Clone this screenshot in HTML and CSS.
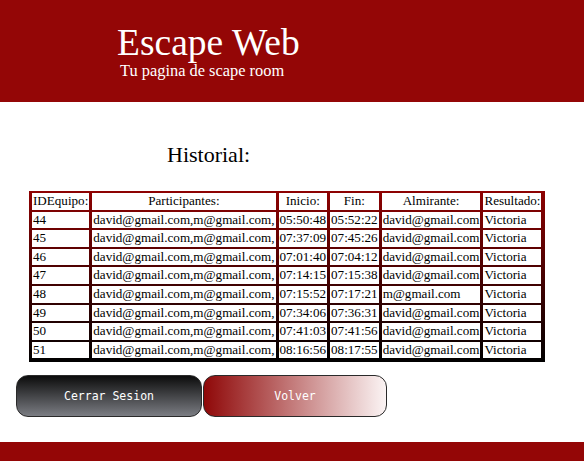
FILE: index.html
```html
<!DOCTYPE html>
<html lang="es">
<head>
<meta charset="utf-8">
<title>Escape Web - Historial</title>
<link rel="stylesheet" href="styles.css">
</head>
<body>
<header class="site-header">
  <h1 class="site-title">Escape Web</h1>
  <p class="site-subtitle">Tu pagina de scape room</p>
</header>
<main class="content">
  <h2 class="section-title">Historial:</h2>
  <table class="history">
    <thead>
      <tr><th>IDEquipo:</th><th>Participantes:</th><th>Inicio:</th><th>Fin:</th><th>Almirante:</th><th>Resultado:</th></tr>
    </thead>
    <tbody>
      <tr><td>44</td><td>david@gmail.com,m@gmail.com,</td><td>05:50:48</td><td>05:52:22</td><td>david@gmail.com</td><td>Victoria</td></tr>
      <tr><td>45</td><td>david@gmail.com,m@gmail.com,</td><td>07:37:09</td><td>07:45:26</td><td>david@gmail.com</td><td>Victoria</td></tr>
      <tr><td>46</td><td>david@gmail.com,m@gmail.com,</td><td>07:01:40</td><td>07:04:12</td><td>david@gmail.com</td><td>Victoria</td></tr>
      <tr><td>47</td><td>david@gmail.com,m@gmail.com,</td><td>07:14:15</td><td>07:15:38</td><td>david@gmail.com</td><td>Victoria</td></tr>
      <tr><td>48</td><td>david@gmail.com,m@gmail.com,</td><td>07:15:52</td><td>07:17:21</td><td>m@gmail.com</td><td>Victoria</td></tr>
      <tr><td>49</td><td>david@gmail.com,m@gmail.com,</td><td>07:34:06</td><td>07:36:31</td><td>david@gmail.com</td><td>Victoria</td></tr>
      <tr><td>50</td><td>david@gmail.com,m@gmail.com,</td><td>07:41:03</td><td>07:41:56</td><td>david@gmail.com</td><td>Victoria</td></tr>
      <tr><td>51</td><td>david@gmail.com,m@gmail.com,</td><td>08:16:56</td><td>08:17:55</td><td>david@gmail.com</td><td>Victoria</td></tr>
    </tbody>
  </table>
  <div class="actions">
    <button class="btn btn-dark" type="button">Cerrar Sesion</button>
    <button class="btn btn-red" type="button">Volver</button>
  </div>
</main>
<footer class="site-footer"></footer>
</body>
</html>
```
FILE: styles.css
```css
html, body {
  margin: 0;
  padding: 0;
  background: #ffffff;
  font-family: "Liberation Serif", "Times New Roman", serif;
  color: #000;
}

.site-header {
  background: #940606;
  height: 102px;
  box-sizing: border-box;
  padding: 25px 0 0 117px;
  color: #ffffff;
}

.site-title {
  margin: 0;
  font-weight: normal;
  font-size: 37.5px;
  line-height: 36px;
}

.site-subtitle {
  margin: 3px 0 0 3px;
  font-size: 16.4px;
  line-height: 14px;
}

.section-title {
  margin: 40px 0 23px 167px;
  font-weight: normal;
  font-size: 22px;
  line-height: 26px;
}

.history {
  margin-left: 29px;
  border-collapse: separate;
  border-spacing: 3px 2px;
  padding: 0 1px 2px 0;
  background: linear-gradient(#8e0202, #000000);
  font-size: 13.1px;
}

.history th,
.history td {
  background: #ffffff;
  padding: 0 1px;
  line-height: 16.6px;
  white-space: nowrap;
}

.history th {
  font-weight: normal;
  text-align: center;
}

.history td {
  text-align: left;
}

.actions {
  display: flex;
  gap: 1px;
  margin: 13px 0 0 16px;
}

.btn {
  width: 186px;
  height: 42px;
  border: 1px solid #2a2a2a;
  border-radius: 12px;
  color: #ffffff;
  font-family: "DejaVu Sans Mono", "Liberation Mono", monospace;
  font-size: 11.5px;
  cursor: pointer;
  padding: 0;
}

.btn-dark {
  background: linear-gradient(#0c0c0c, #7b7d83);
}

.btn-red {
  width: 184px;
  background: linear-gradient(to right, #8f0808, #fbf4f4);
}

.site-footer {
  background: #940606;
  height: 30px;
  margin-top: 25px;
}
```
